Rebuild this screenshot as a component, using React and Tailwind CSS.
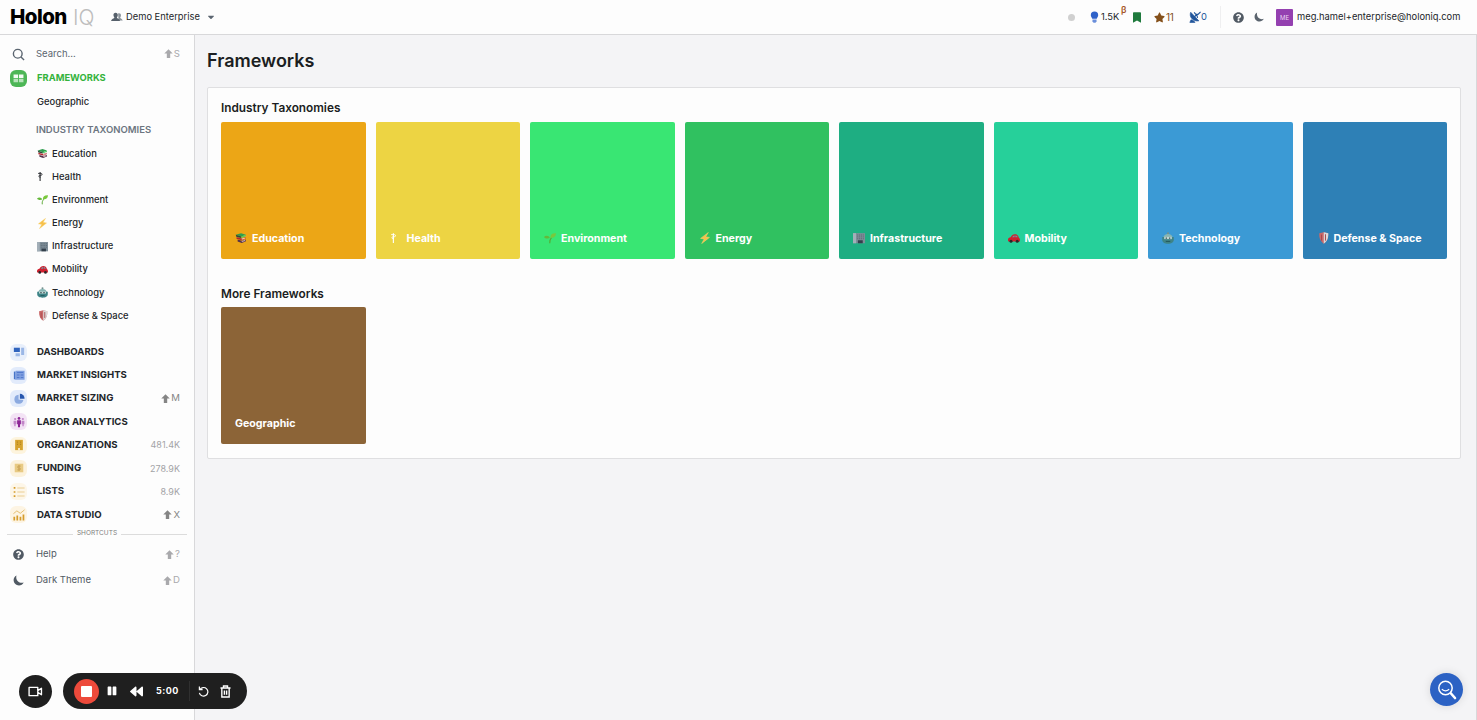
import clsx from 'clsx';
import { FaCaretDown, FaStar, FaBookmark, FaQuestionCircle, FaPause, FaBackward } from 'react-icons/fa';
import { ImArrowUp } from 'react-icons/im';

const taxonomies = [
  { name: 'Education', icon: 'books', color: 'bg-[#eca616]' },
  { name: 'Health', icon: 'staff', color: 'bg-[#edd443]' },
  { name: 'Environment', icon: 'seedling', color: 'bg-[#39e673]' },
  { name: 'Energy', icon: 'bolt', color: 'bg-[#30c160]' },
  { name: 'Infrastructure', icon: 'building', color: 'bg-[#1eae82]' },
  { name: 'Mobility', icon: 'car', color: 'bg-[#26d09a]' },
  { name: 'Technology', icon: 'robot', color: 'bg-[#3b9ad5]' },
  { name: 'Defense & Space', icon: 'shield', color: 'bg-[#2e80b6]' },
];

const sections = [
  { name: 'Dashboards', icon: 'dashboards', bg: 'bg-[#e8effb]' },
  { name: 'Market Insights', icon: 'insights', bg: 'bg-[#e2ebfb]' },
  { name: 'Market Sizing', icon: 'sizing', bg: 'bg-[#e2ebfb]', shortcut: 'M' },
  { name: 'Labor Analytics', icon: 'labor', bg: 'bg-[#f3e3f5]' },
  { name: 'Organizations', icon: 'organizations', bg: 'bg-[#fdf4de]', count: '481.4K' },
  { name: 'Funding', icon: 'funding', bg: 'bg-[#fcf2dc]', count: '278.9K' },
  { name: 'Lists', icon: 'lists', bg: 'bg-[#fdf6e8]', count: '8.9K' },
  { name: 'Data Studio', icon: 'studio', bg: 'bg-[#fdf4e3]', shortcut: 'X' },
];

function Emoji({ name, className }) {
  const shapes = {
    books: (
      <>
        <path d="M1 3.5 8 1.5l6.5 2-6 2.5z" fill="#2f9e4f" />
        <path d="M1 3.5 8.5 6v2L2 6.5z" fill="#2c4d3a" />
        <path d="m8.5 6 6-2.5v1.8L8.5 8z" fill="#4fce62" />
        <path d="m2 7 7 1.7 5-1.7v2L9 11 2 9z" fill="#b3262e" />
        <path d="m9 8.7 4.5-1.2v1.3L9 10.2z" fill="#efd9cf" />
        <path d="m3.5 10 5.5 1.7 5.5-1.7v2.3L9 14.5 3.5 12.7z" fill="#53304a" />
        <path d="m9 12 4.5-1.2V12L9 13.3z" fill="#d9b8ba" />
      </>
    ),
    staff: (
      <g fill="none" stroke="currentColor">
        <path d="M4.500 1.500v13" strokeWidth="1.500" />
        <path d="M1.500 3.500h4.500c1.800 0 1.800 2.800 0 2.800H3.800c-1.500 0-1.500 2.600 0 2.600h1.500" strokeWidth="1.200" />
      </g>
    ),
    seedling: (
      <>
        <path d="M7.7 15c-.5-3 .2-5.300 2.300-7.500" fill="none" stroke="#56a72f" strokeWidth="1.400" />
        <path d="M0 6.500c2.500-2.500 6.500-2 7.800 1.500C5 9 1.500 9 0 6.500z" fill="#65b83a" />
        <path d="M8.500 7.500C8.500 3.500 11 1.500 16 1.800c-.3 4.500-3 6.700-7.500 5.700z" fill="#79c83d" />
      </>
    ),
    bolt: (
      <path d="M12.500.5 2 8.500l4.800.8L3.500 15.500 14 7.200l-5-.9z" fill="#f7c04a" stroke="#f9d573" strokeWidth=".6" />
    ),
    building: (
      <>
        <path d="M0 1.500h16V15H0z" fill="#7e8d98" />
        <path d="M0 1.500h4V15H0z" fill="#a3afb8" />
        <path d="M5.500 4h9M5.500 6.500h9M5.500 9h9" stroke="#5a6873" strokeWidth="1.200" strokeDasharray="1.500 1" />
        <path d="M6.500 11H13v4H6.500z" fill="#333f4b" />
      </>
    ),
    car: (
      <>
        <path d="M0 10c.2-2 1.500-2.500 3.500-3C5 4.500 6.500 3 9 3c3 0 4.800 1.500 5.500 4.500 1.200.5 1.500 1.500 1.500 5H.5C0 12-.1 11 0 10z" fill="#cf1f2e" />
        <path d="M5.500 7c1-1.700 2-2.500 3.300-2.500V7zm4.300-2.500c1.600 0 2.500.7 3 2.500h-3z" fill="#7b8f9c" />
        <circle cx="4" cy="12.200" r="2" fill="#2a2528" />
        <circle cx="12.300" cy="12.200" r="2" fill="#2a2528" />
      </>
    ),
    robot: (
      <>
        <circle cx="8" cy="1.800" r="1.500" fill="#74918f" />
        <path d="M1.500 9c0-4 2.700-6.200 6.500-6.200S14.500 5 14.500 9z" fill="#86b4b2" />
        <path d="M.3 6.800h15.400v3.700c0 3-3.500 5-7.700 5s-7.700-2-7.700-5z" fill="#3e8487" />
        <path d="M3 6.500h10v3H3z" fill="#c9dedb" />
        <path d="M4.800 7.300h2V9h-2zm4.400 0h2V9h-2z" fill="#3b5052" />
        <path d="M5 12.500h6" stroke="#1f5156" strokeWidth="1.200" />
      </>
    ),
    shield: (
      <>
        <path d="M3 1.800 9 .3l6 1.500c.3 7-1.700 11-6 13.900C4.700 12.800 2.700 8.800 3 1.800z" fill="#c9696a" />
        <path d="M9 .3l6 1.500c.3 7-1.700 11-6 13.900z" fill="#dcd9d9" />
        <path d="M6 3.500v8M11.300 3v8.500" stroke="#a8484c" strokeWidth="1.300" />
      </>
    ),
  };
  return (
    <svg viewBox="0 0 16 16" className={clsx('shrink-0', className)} aria-hidden="true">
      {shapes[name]}
    </svg>
  );
}

function SectionIcon({ name }) {
  const shapes = {
    dashboards: (
      <>
        <path d="M1 2h7v5H1z" fill="#2f63bd" />
        <path d="M9.500 2H13v8.500H9.500z" fill="#9bb7e6" />
        <path d="M3 8.500h5V12H3z" fill="#9bb7e6" />
      </>
    ),
    insights: (
      <>
        <path d="M1 3h2v9H1z" fill="#4674c9" />
        <path d="M3 2h10.500v10.500H2.500z" fill="#7f9fe0" />
        <path d="M4.500 4h7.500M4.500 7h3M9 7h3M4.500 10h3M9 10h3" stroke="#5279cc" strokeWidth="1.200" />
      </>
    ),
    sizing: (
      <>
        <path d="M6.500 2a5.300 5.300 0 1 0 5.600 6.300L6.500 7.500z" fill="#8caae0" />
        <path d="M8 1a5.500 5.500 0 0 1 5.500 5.700H8z" fill="#2656ae" />
      </>
    ),
    labor: (
      <>
        <circle cx="7" cy="2.800" r="1.600" fill="#8d2596" />
        <path d="M4.800 5h4.400v4.500h-1V13H5.800V9.500h-1z" fill="#8d2596" />
        <circle cx="2.500" cy="3.500" r="1.300" fill="#c184c7" />
        <circle cx="11.500" cy="3.500" r="1.300" fill="#c184c7" />
        <path d="M.7 5.500H4v4H3V12H1.500V9.500H.7zM10 5.500h3.300v4h-.8V12H11V9.500h-1z" fill="#c184c7" />
      </>
    ),
    organizations: (
      <>
        <path d="M2.500 1h9v12h-9z" fill="#d6a32d" />
        <path d="M5.200 3v5M8.800 3v5" stroke="#b5851c" strokeWidth="1.200" strokeDasharray="1.500 1" />
        <path d="M6 10.500h2V13H6z" fill="#fdf2d8" />
      </>
    ),
    funding: (
      <>
        <path d="M2 2h10v10H2z" fill="#e8ca83" />
        <path d="M9 4.800H6.500a1.100 1.100 0 0 0 0 2.200h1a1.100 1.100 0 0 1 0 2.200H5M7 3.500v7" fill="none" stroke="#c79f52" strokeWidth="1" />
      </>
    ),
    lists: (
      <>
        <path d="M5 2.300h8.500M5 7h8.500M5 11.700h8.500" stroke="#ebcd92" strokeWidth="1.300" />
        <path d="M.8 1.300h2v2h-2zM.8 6h2v2h-2zM.8 10.700h2v2h-2z" fill="#d59b27" />
      </>
    ),
    studio: (
      <>
        <path d="M1.500 9v4.500M5 7.500v6M8.700 9v4.500M12.200 6.500v7" stroke="#d69c2b" strokeWidth="2" />
        <path d="m.5 5.500 4-3.300L8.500 5l5-4" fill="none" stroke="#e3bb69" strokeWidth="1.100" />
      </>
    ),
  };
  return (
    <svg viewBox="0 0 14 14" className="size-3" aria-hidden="true">
      {shapes[name]}
    </svg>
  );
}

function Moon({ className }) {
  return (
    <svg viewBox="0 0 12 12" className={className} fill="currentColor" aria-hidden="true">
      <path d="M3.800.5C.2 2.200-.3 7 2.300 9.600c2.800 2.900 7.700 2.200 9.400-1.400C7.200 9.800 2.300 6 3.800.5z" />
    </svg>
  );
}

function Shortcut({ label, dark }) {
  return (
    <span className={clsx('flex items-center gap-px text-[9.600px]', dark ? 'text-[#858585]' : 'text-[#a9a9ac]')}>
      <ImArrowUp className="size-[9px]" />
      {label}
    </span>
  );
}

function Header() {
  return (
    <header className="flex h-[35px] shrink-0 items-center border-b border-[#d8d8da] bg-[#fdfdfd] pr-[17px] pl-[10px] text-[9.350px] text-[#222529]">
      <div className="flex w-[101px] items-center leading-none">
        <span className="w-[63px] text-[20.500px] font-extrabold tracking-[-0.550px] text-black">Holon</span>
        <span className="text-[21px] font-light text-[#bdbdbd]">IQ</span>
      </div>
      <svg viewBox="0 0 22 18" className="h-[10px] w-[12px]">
        <path d="M13 2.500c3-1 5.500.5 5.200 3.800-.2 2-.8 3-1.500 4 .5 1.500 4 2 4.800 5H14z" fill="#8a929a" />
        <path d="M8.500 1C5.800 1 4.300 3 4.500 5.800c.2 2 .8 3.200 1.800 4.200C6 12 .5 12.200.3 16.500h16.200c-.2-4.300-5.500-4.500-5.800-6.500 1-1 1.600-2.200 1.800-4.200C12.700 3 11.200 1 8.500 1z" fill="#56606b" />
      </svg>
      <span className="ml-[3px] w-[76px] whitespace-nowrap">Demo Enterprise</span>
      <FaCaretDown className="ml-[4px] size-[10px] text-[#5b6570]" />

      <div className="ml-auto flex items-center">
        <span className="size-[7px] rounded-full bg-[#d0d0d0]" />
        <svg viewBox="0 0 9 13" className="ml-[15px] h-[12px] w-[9px]">
          <path d="M4.500.5a4 4 0 0 1 4 4c0 1.700-1.200 2.300-1.600 4H2.100C1.700 6.800.5 6.200.5 4.500a4 4 0 0 1 4-4z" fill="#2f62c9" />
          <path d="M2.300 9.300h4.400v2L5.500 12.700h-2L2.300 11.300z" fill="#6b8fdb" />
        </svg>
        <span className="relative ml-[2px] w-[32px]">
          1.5K
          <span className="absolute -top-[5px] left-[20px] text-[9px] leading-none font-semibold text-[#a5561f]">β</span>
        </span>
        <FaBookmark className="h-[11px] w-[8px] text-[#1f7a3d]" />
        <FaStar className="ml-[13px] size-[11px] text-[#84501a]" />
        <span className="ml-[1px] w-[23px] text-[10px] tracking-[-0.200px] text-[#84501a]">11</span>
        <svg viewBox="0 0 14 14" className="size-[12px]" fill="none" stroke="#20559b">
          <path d="M2 1.500C0 6 3.500 12.500 11.500 11.500z" fill="#20559b" strokeWidth=".8" />
          <path d="M2.500 10 1 13.300h6L5 11" fill="#20559b" strokeWidth=".8" />
          <path d="M6 7.200 9.500 3.500M6 1.500l2 2.500h2.500L13.500 1M9 4l1 4" strokeWidth="1.300" />
        </svg>
        <span className="w-[7px] text-[#20559b]">0</span>
        <span className="ml-[12px] h-[22px] w-px bg-[#efeff0]" />
        <FaQuestionCircle className="ml-[12px] size-[11px] text-[#515a64]" />
        <Moon className="ml-[10px] size-[10px] text-[#5b646e]" />
        <span className="ml-[12px] flex size-[17px] items-center justify-center rounded-[1px] bg-[#9440b0] text-[6px] text-[#ecd5f3]">
          ME
        </span>
        <span className="ml-[4px] w-[163px] whitespace-nowrap">meg.hamel+enterprise@holoniq.com</span>
      </div>
    </header>
  );
}

function Sidebar() {
  return (
    <aside className="flex w-[195px] shrink-0 flex-col border-r border-[#d8d8da] bg-[#fdfdfd] text-[9.500px] text-[#222529]">
      <div className="mt-[7px] flex h-[24px] items-center pr-[14px] pl-3 text-[#5b6570]">
        <svg viewBox="0 0 14 14" className="size-[13px]" fill="none" stroke="currentColor" strokeWidth="1.500">
          <circle cx="6.200" cy="6.200" r="4.700" />
          <path d="m9.700 9.700 3.300 3.300" />
        </svg>
        <span className="ml-[11px] flex-1">Search...</span>
        <Shortcut label="S" />
      </div>

      <div className="flex h-[25px] items-center pl-[10px]">
        <span className="flex size-[17px] items-center justify-center rounded-[6px] bg-[#4db656]">
          <svg viewBox="0 0 12 10" className="h-[9px] w-[11px]">
            <path d="M.5.5h5v4h-5zM6.500.5h5v4h-5z" fill="#f4fbf4" />
            <path d="M.5 5.300h5v4h-5zM6.500 5.300h5v4h-5z" fill="#b9e3bc" />
          </svg>
        </span>
        <span className="ml-[10px] text-[9.400px] font-bold text-[#35b33c]">FRAMEWORKS</span>
      </div>
      <div className="flex h-[22px] items-center pl-[37px] text-[9.400px] font-medium">Geographic</div>

      <div className="mt-[6px] flex h-[22px] items-center pl-[36px] font-semibold text-[#6c7580]">INDUSTRY TAXONOMIES</div>
      <ul className="pt-px text-[9.400px] font-medium">
        {taxonomies.map((item) => (
          <li key={item.name} className="flex h-[23.200px] items-center pl-[37px]">
            <Emoji name={item.icon} className="mr-[4px] size-[11px]" />
            {item.name}
          </li>
        ))}
      </ul>

      <ul className="mt-[13px]">
        {sections.map((item) => (
          <li key={item.name} className="flex h-[23.250px] items-center pr-[14px] pl-[10px]">
            <span className={clsx('flex size-[17px] items-center justify-center rounded-[6px]', item.bg)}>
              <SectionIcon name={item.icon} />
            </span>
            <span className="ml-[10px] flex-1 text-[9.600px] font-bold uppercase">{item.name}</span>
            {item.count && <span className="text-[9px] text-[#a3a3a6]">{item.count}</span>}
            {item.shortcut && <Shortcut label={item.shortcut} dark />}
          </li>
        ))}
      </ul>

      <div className="mx-[7px] mt-[3px] flex h-[9px] items-center gap-1 text-[6.500px] text-[#7d7d7d]">
        <span className="h-px flex-1 bg-[#dcdcdc]" />
        SHORTCUTS
        <span className="h-px flex-1 bg-[#dcdcdc]" />
      </div>
      <div className="mt-[3px] flex h-[26px] items-center pr-[14px] pl-[13px] text-[#515a64]">
        <FaQuestionCircle className="size-[11px]" />
        <span className="ml-[12px] flex-1">Help</span>
        <Shortcut label="?" />
      </div>
      <div className="flex h-[26px] items-center pr-[14px] pl-[13px] text-[#515a64]">
        <Moon className="size-[11px]" />
        <span className="ml-[12px] flex-1">Dark Theme</span>
        <Shortcut label="D" />
      </div>
    </aside>
  );
}

function Tile({ name, icon, color }) {
  return (
    <div
      className={clsx(
        'flex h-[137px] items-end rounded-[2px] pb-[12px] pl-[14px] text-[10.650px] font-bold text-white',
        color,
      )}
    >
      {icon && <Emoji name={icon} className="mr-[5px] mb-[3px] size-[12px]" />}
      <span className="leading-[17px]">{name}</span>
    </div>
  );
}

function Recorder() {
  return (
    <div className="fixed bottom-[11px] left-[19px] flex items-center text-white">
      <span className="flex size-[33px] items-center justify-center rounded-full bg-[#1f1f1f]">
        <svg viewBox="0 0 16 12" className="h-[11px] w-[15px]" fill="none" stroke="currentColor" strokeWidth="1.500" strokeLinejoin="round">
          <path d="M1 1.500h9.500v9H1zM10.500 5l4-2.500v7L10.500 7z" />
        </svg>
      </span>
      <div className="ml-[11px] flex h-9 w-[184px] items-center rounded-full bg-[#1f1f1f] pl-[11px]">
        <span className="flex size-[25px] items-center justify-center rounded-full bg-[#ed4a3b]">
          <span className="size-[11px] rounded-[1px] bg-white" />
        </span>
        <FaPause className="ml-[8px] size-[10px]" />
        <FaBackward className="ml-[13px] size-[13px]" />
        <span className="ml-[13px] w-[33px] text-[9px] font-bold tracking-[0.500px]">5:00</span>
        <span className="h-5 w-px bg-[#303030]" />
        <svg viewBox="0 0 12 12" className="ml-[8px] size-[11px]" fill="none" stroke="currentColor" strokeWidth="1.300">
          <path d="M2 4a4.700 4.700 0 1 1-.5 3.500M1.500.5V4H5" />
        </svg>
        <svg viewBox="0 0 12 14" className="ml-[11px] h-[13px] w-[11px]" fill="none" stroke="currentColor" strokeWidth="1.500">
          <path d="M.5 3.200h11M3.800 3V1h4.400v2M2 3.500V13h8V3.500M4.800 6v4.500M7.200 6v4.500" />
        </svg>
      </div>
    </div>
  );
}

export default function App() {
  return (
    <div className="flex h-screen flex-col overflow-hidden bg-[#f4f4f6] font-[Inter,sans-serif] leading-normal">
      <Header />
      <div className="flex min-h-0 flex-1">
        <Sidebar />
        <main className="min-w-0 flex-1 border-r border-[#d8d8da] pr-[15px] pl-[12px]">
          <h1 className="mt-[10px] text-[18px] leading-[31px] font-semibold text-[#1b1e22]">Frameworks</h1>
          <section className="mt-[11px] h-[372px] rounded-[2px] border border-[#dfdfe1] bg-[#fdfdfd] px-[13px] text-[#1b1e22]">
            <h2 className="mt-[11px] mb-[4px] text-[11.800px] leading-[19px] font-semibold">Industry Taxonomies</h2>
            <div className="grid grid-cols-8 gap-[10px]">
              {taxonomies.map((item) => (
                <Tile key={item.name} {...item} />
              ))}
            </div>
            <h2 className="mt-[26px] mb-[3px] text-[11.800px] leading-[19px] font-semibold">More Frameworks</h2>
            <div className="grid grid-cols-8 gap-[10px]">
              <Tile name="Geographic" color="bg-[#8c6437]" />
            </div>
          </section>
        </main>
      </div>

      <Recorder />
      <button
        aria-label="Search"
        className="fixed right-[14px] bottom-[14px] flex size-[33px] items-center justify-center rounded-full bg-[#2c62c4] shadow-[0_0_10px_rgba(0,0,0,0.12)]"
      >
        <svg viewBox="0 0 20 20" className="size-[20px]" fill="none" stroke="white" strokeLinecap="round">
          <circle cx="8.500" cy="8" r="6.700" strokeWidth="1.500" />
          <path d="M5.200 9.500c2 1.600 4.600 1.600 6.600 0" strokeWidth="1.200" />
          <path d="m14 13.500 4 4.500" strokeWidth="2.600" />
        </svg>
      </button>
    </div>
  );
}
